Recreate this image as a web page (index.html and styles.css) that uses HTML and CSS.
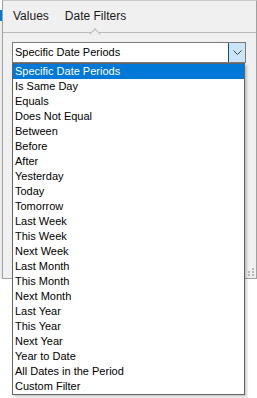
FILE: index.html
```html
<!DOCTYPE html>
<html lang="en">
<head>
  <meta charset="UTF-8" />
  <title>Date Filters</title>
  <link rel="stylesheet" href="styles.css">
</head>
<body>
  <div class="page">
    <div class="edge"></div>
    <div class="panel">
      <div class="tabs">
        <span class="tab">Values</span>
        <span class="tab active">Date Filters</span>
      </div>

      <div class="combo">
        <div class="combo-text">Specific Date Periods</div>
        <div class="combo-btn">
          <svg width="9" height="5" viewBox="0 0 9 5"><path d="M0.5 0.5 L4.5 4.5 L8.5 0.5" fill="none" stroke="#444" stroke-width="1"/></svg>
        </div>

        <ul class="list">
          <li class="selected">Specific Date Periods</li>
          <li>Is Same Day</li>
          <li>Equals</li>
          <li>Does Not Equal</li>
          <li>Between</li>
          <li>Before</li>
          <li>After</li>
          <li>Yesterday</li>
          <li>Today</li>
          <li>Tomorrow</li>
          <li>Last Week</li>
          <li>This Week</li>
          <li>Next Week</li>
          <li>Last Month</li>
          <li>This Month</li>
          <li>Next Month</li>
          <li>Last Year</li>
          <li>This Year</li>
          <li>Next Year</li>
          <li>Year to Date</li>
          <li>All Dates in the Period</li>
          <li>Custom Filter</li>
        </ul>
      </div>

      <svg class="grip" width="6" height="8" viewBox="0 0 6 8">
        <rect x="4" y="0" width="2" height="2" fill="#b8b8b8"/>
        <rect x="0" y="3" width="2" height="2" fill="#b8b8b8"/>
        <rect x="4" y="3" width="2" height="2" fill="#b8b8b8"/>
        <rect x="0" y="6" width="2" height="2" fill="#b8b8b8"/>
        <rect x="4" y="6" width="2" height="2" fill="#b8b8b8"/>
      </svg>
    </div>
  </div>
</body>
</html>
```

FILE: styles.css
```css
html, body {
  min-height: 398px;
}
body {
  margin: 0;
  background: #fff;
  font-family: 'Liberation Sans', Arial, sans-serif;
  font-size: 11px;
  color: #000;
}
.page {
  display: flex;
  width: 257px;
  height: 279px;
}
.edge {
  width: 2px;
  background: #ececec;
  border-top: 11px solid #fff;
  position: relative;
}
.edge::before {
  content: "";
  position: absolute;
  top: -1px;
  left: 0;
  width: 2px;
  height: 11px;
  background: #0078d7;
}
.panel {
  flex: 1;
  position: relative;
  background: #f0f0f0;
  border: 1px solid #a0a0a0;
  border-top-color: #c8c8c8;
}
.tabs {
  display: flex;
  gap: 16px;
  height: 31px;
  padding-left: 10px;
  border-bottom: 1px solid #b9b9b9;
  align-items: center;
  font-size: 12px;
}
.tab {
  position: relative;
  color: #1a1a1a;
  padding-bottom: 1px;
}
.tab.active::after {
  content: "";
  position: absolute;
  left: 26px;
  bottom: -14px;
  width: 7px;
  height: 7px;
  background: #f0f0f0;
  border-left: 1px solid #b9b9b9;
  border-top: 1px solid #b9b9b9;
  transform: rotate(45deg);
}
.combo {
  position: relative;
  display: flex;
  margin: 9px 0 0 9px;
  width: 232px;
  height: 19px;
  border: 1px solid #7a7a7a;
  background: #fff;
  z-index: 2;
}
.combo-text {
  flex: 1;
  padding-left: 2px;
  line-height: 19px;
  font-size: 11px;
}
.combo-btn {
  width: 16px;
  background: #cce4f7;
  border-left: 1px solid #005499;
  display: flex;
  align-items: center;
  justify-content: center;
}
.list {
  position: absolute;
  top: 20px;
  left: -1px;
  width: 231px;
  margin: 0;
  padding: 0;
  list-style: none;
  background: #fff;
  border: 1px solid #646464;
  box-shadow: 2px 2px 2px rgba(0, 0, 0, 0.2);
}
.list li {
  height: 15px;
  line-height: 15px;
  padding-left: 2px;
  white-space: nowrap;
}
.list li.selected {
  background: #0078d7;
  color: #fff;
}
.grip {
  position: absolute;
  right: 2px;
  bottom: 2px;
}
```
